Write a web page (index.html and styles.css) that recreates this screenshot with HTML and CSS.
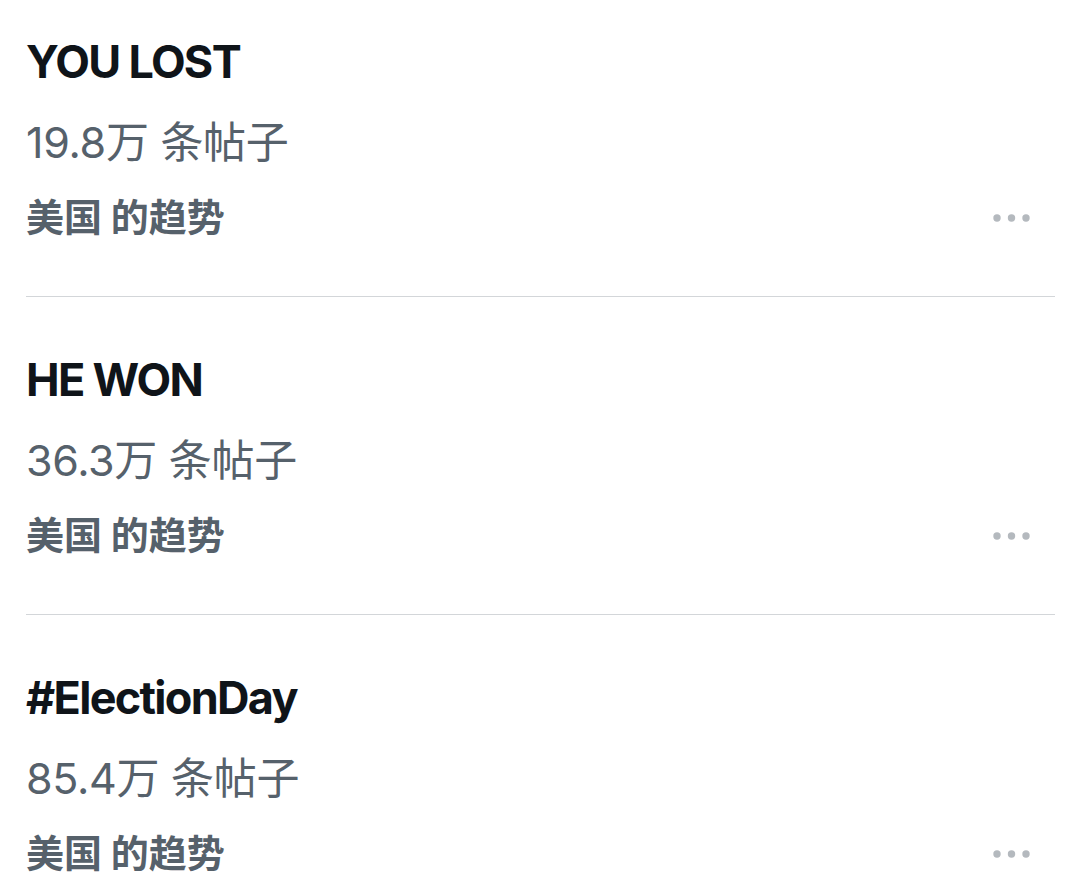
FILE: index.html
```
<!DOCTYPE html>
<html lang="zh-CN">
<head>
<meta charset="utf-8">
<title>Trends</title>
<link rel="stylesheet" href="styles.css">
</head>
<body>
<div class="list">
  <div class="item">
    <div class="title">YOU LOST</div>
    <div class="count">19.8万 条帖子</div>
    <div class="meta"><span>美国 的趋势</span>
      <svg class="dots" width="40" height="10" viewBox="0 0 40 10"><circle cx="4" cy="5" r="3.7"/><circle cx="18.5" cy="5" r="3.7"/><circle cx="33" cy="5" r="3.7"/></svg>
    </div>
  </div>
  <div class="item">
    <div class="title">HE WON</div>
    <div class="count">36.3万 条帖子</div>
    <div class="meta"><span>美国 的趋势</span>
      <svg class="dots" width="40" height="10" viewBox="0 0 40 10"><circle cx="4" cy="5" r="3.7"/><circle cx="18.5" cy="5" r="3.7"/><circle cx="33" cy="5" r="3.7"/></svg>
    </div>
  </div>
  <div class="item">
    <div class="title">#ElectionDay</div>
    <div class="count">85.4万 条帖子</div>
    <div class="meta"><span>美国 的趋势</span>
      <svg class="dots" width="40" height="10" viewBox="0 0 40 10"><circle cx="4" cy="5" r="3.7"/><circle cx="18.5" cy="5" r="3.7"/><circle cx="33" cy="5" r="3.7"/></svg>
    </div>
  </div>
</div>
</body>
</html>
```
FILE: styles.css
```
html, body {
  margin: 0;
  padding: 0;
  background: #ffffff;
}
body {
  width: 1080px;
  height: 884px;
  overflow: hidden;
  font-family: Inter, "Noto Sans CJK SC", sans-serif;
}
.list {
  padding: 0 25px 0 26px;
}
.item {
  padding: 43px 0 49px 0;
  border-bottom: 1px solid #d3d6d9;
}
.item:first-child {
  padding-top: 22px;
}
.title {
  font-size: 45px;
  line-height: 80px;
  height: 80px;
  font-weight: 700;
  color: #0f1419;
  letter-spacing: -1.7px;
}
.count {
  font-size: 43px;
  line-height: 80px;
  height: 80px;
  color: #56616b;
  letter-spacing: -0.3px;
}
.meta {
  display: flex;
  justify-content: space-between;
  align-items: center;
  height: 65px;
  line-height: 65px;
  padding-right: 22px;
  font-family: "Noto Sans CJK SC", sans-serif;
  font-size: 38px;
  font-weight: 700;
  color: #56616b;
}
.dots {
  fill: #b4b9be;
  margin-top: 7px;
}
```
